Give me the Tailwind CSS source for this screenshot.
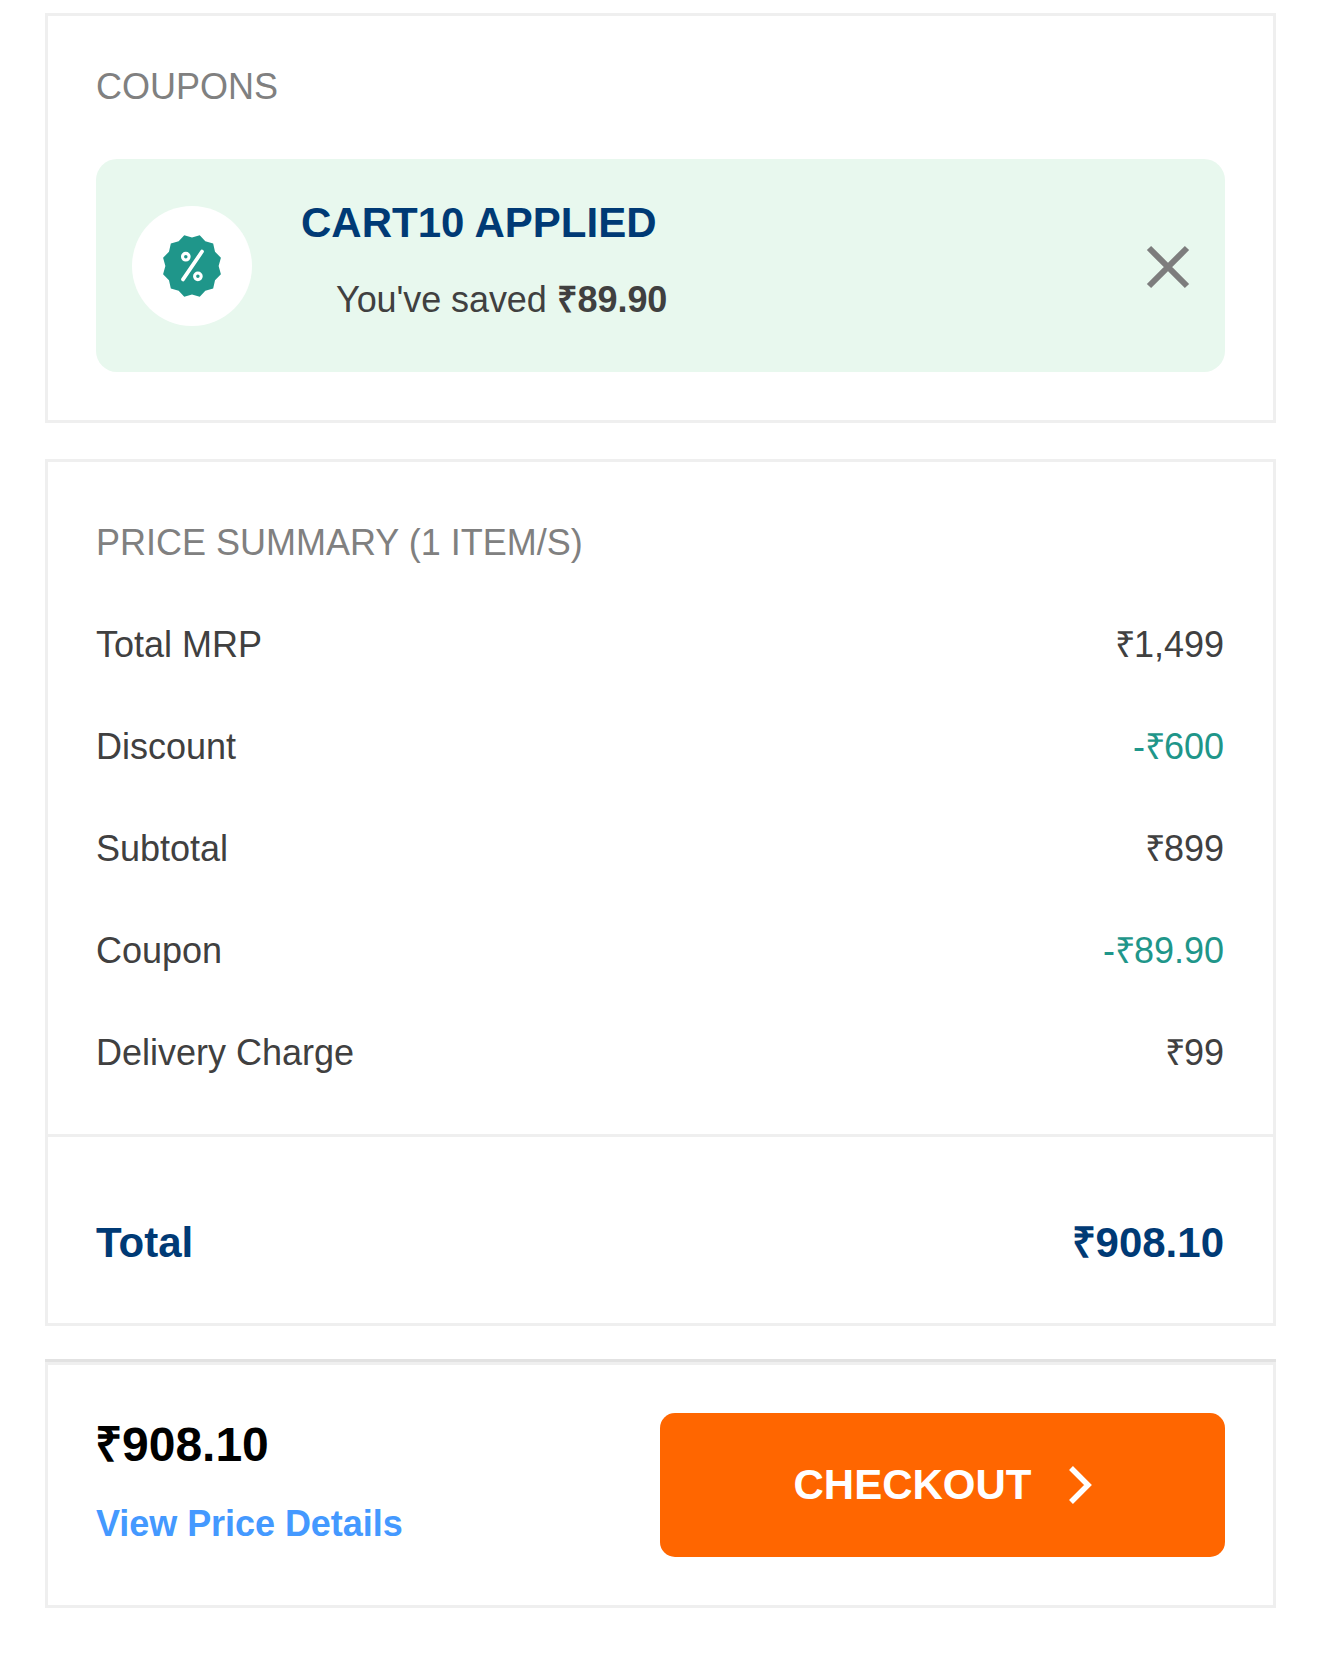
<!DOCTYPE html>
<html lang="en">
<head>
<meta charset="utf-8"/>
<title>Cart Summary</title>
<script src="https://cdn.jsdelivr.net/npm/@tailwindcss/browser@4"></script>
</head>
<body class="bg-white font-['Liberation_Sans',Arial,sans-serif]">
<div class="w-[1320px] h-[1656px] overflow-hidden pl-[45px] pr-[44px] pt-[13px]">

<!-- coupons -->
<section class="border-[3px] border-[#efefef] px-[48px] pt-[50px] pb-[48px]">
  <h2 class="h-[42px] leading-[42px] text-[36px] text-[#808080]">COUPONS</h2>
  <div class="mt-[51px] h-[213px] rounded-[21px] bg-[#e8f8ee] pl-[36px] pr-[33px] flex">
    <div class="mt-[47px] w-[120px] h-[120px] shrink-0 rounded-full bg-white flex items-center justify-center">
      <svg class="w-[60px] h-[64px]" viewBox="0 0 58 62">
        <polygon fill="#1f968a" points="29,3.4 36.5,1.1 41.9,7.1 49.5,9.1 51.3,17.2 57,23 54.8,31 57,39 51.3,44.8 49.5,52.9 41.9,54.9 36.5,60.9 29,58.6 21.5,60.9 16.1,54.9 8.5,52.9 6.7,44.8 1,39 3.2,31 1,23 6.7,17.2 8.5,9.1 16.1,7.1 21.5,1.1"/>
        <circle cx="23" cy="22" r="3.2" fill="none" stroke="#fff" stroke-width="3"/>
        <circle cx="34.7" cy="41" r="3.2" fill="none" stroke="#fff" stroke-width="3"/>
        <line x1="20.3" y1="44" x2="38.7" y2="17" stroke="#fff" stroke-width="3.6" stroke-linecap="round"/>
      </svg>
    </div>
    <div class="ml-[49px] pt-[39px]">
      <div class="h-[50px] leading-[50px] text-[42px] font-bold text-[#003a75]">CART10 APPLIED</div>
      <div class="mt-[27px] h-[50px] leading-[50px] pl-[35px] text-[36px] tracking-[-0.08px] text-[#404040]">You've saved <b>₹89.90</b></div>
    </div>
    <svg class="ml-auto self-center mt-[2px] w-[48px] h-[48px]" viewBox="0 0 48 48" fill="none" stroke="#7d7d7d" stroke-width="6">
      <path d="M5 5 L43 43 M43 5 L5 43"/>
    </svg>
  </div>
</section>

<!-- price summary -->
<section class="mt-[36px] border-[3px] border-[#efefef]">
  <div class="pl-[48px] pr-[49px] pt-[60px] pb-[30px] border-b-[3px] border-[#efefef]">
    <h2 class="h-[42px] leading-[42px] text-[36px] text-[#808080]">PRICE SUMMARY (1 ITEM/S)</h2>
    <div class="mt-[30px] text-[36px] text-[#404040]">
      <div class="h-[102px] flex items-center justify-between"><span>Total MRP</span><span><span class="mr-[-2px]">₹</span>1,499</span></div>
      <div class="h-[102px] flex items-center justify-between"><span>Discount</span><span class="text-[#1f968a]">-<span class="mr-[-2px]">₹</span>600</span></div>
      <div class="h-[102px] flex items-center justify-between"><span>Subtotal</span><span><span class="mr-[-2px]">₹</span>899</span></div>
      <div class="h-[102px] flex items-center justify-between"><span>Coupon</span><span class="text-[#1f968a]">-<span class="mr-[-2px]">₹</span>89.90</span></div>
      <div class="h-[102px] flex items-center justify-between"><span>Delivery Charge</span><span><span class="mr-[-2px]">₹</span>99</span></div>
    </div>
  </div>
  <div class="pl-[48px] pr-[49px] pt-[78px] pb-[52px] flex justify-between h-[186px] leading-[56px] text-[42px] font-bold text-[#003a75]">
    <span>Total</span><span>₹908.10</span>
  </div>
</section>

<!-- checkout bar -->
<div class="mt-[33px] h-[3px] bg-[#e2e2e2]"></div>
<section class="border-[3px] border-[#efefef] px-[48px] py-[48px] flex justify-between">
  <div class="pt-[2px]">
    <div class="h-[60px] leading-[60px] text-[48px] font-bold text-black -ml-[1px]">₹908.10</div>
    <div class="mt-[24px] h-[50px] leading-[50px] text-[36px] font-bold tracking-[-0.05px] text-[#4499ff]">View Price Details</div>
  </div>
  <button class="w-[565px] h-[144px] rounded-[15px] bg-[#ff6600] text-white text-[42px] font-bold flex items-center justify-center gap-[36px]">
    <span class="-mt-[2px]">CHECKOUT</span>
    <svg class="w-[24px] h-[38px]" viewBox="0 0 24 38" fill="none" stroke="#fff" stroke-width="5.5">
      <path d="M3 2 L20 19 L3 36"/>
    </svg>
  </button>
</section>

</div>
</body>
</html>
